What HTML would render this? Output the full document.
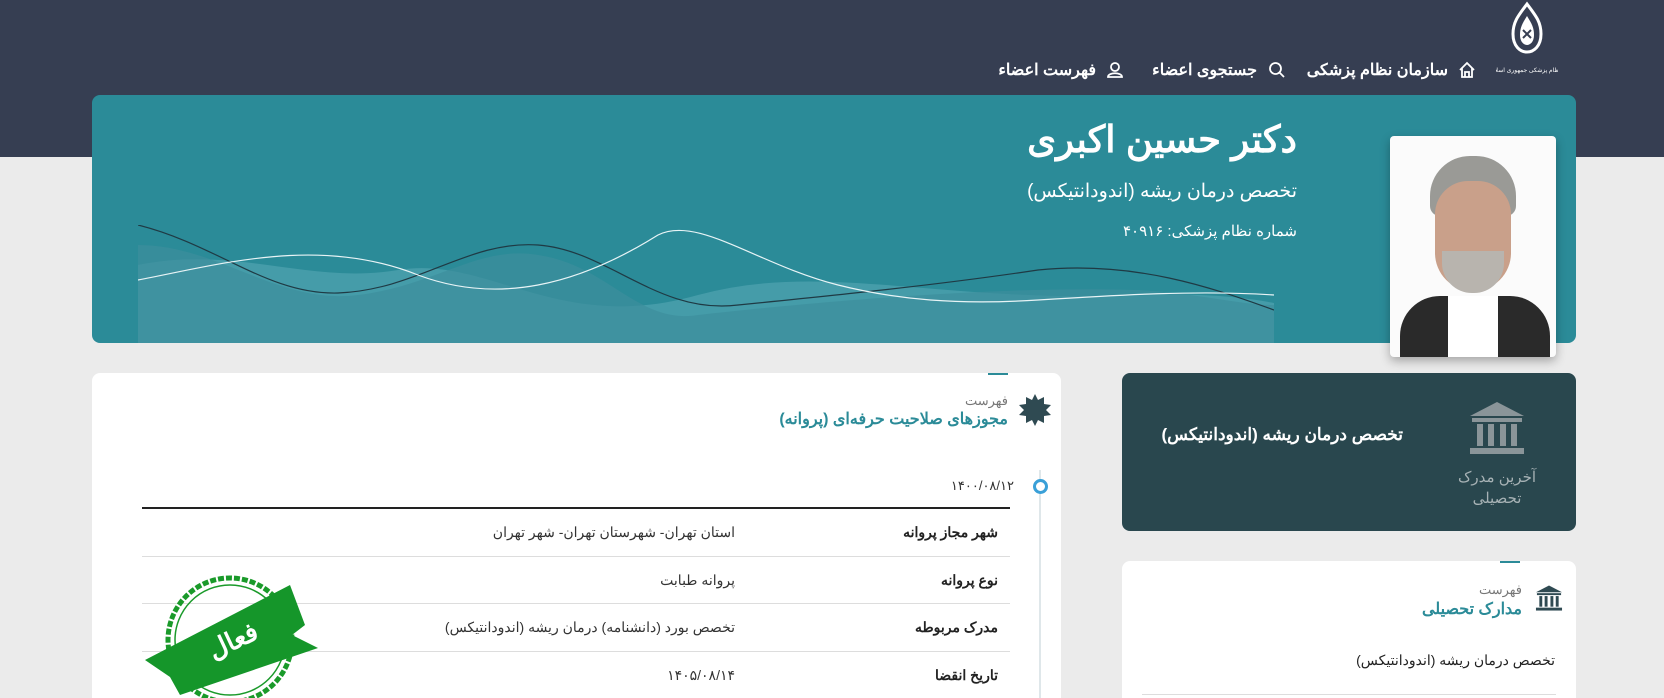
<!DOCTYPE html>
<html lang="fa" dir="rtl"><head><meta charset="utf-8">
<style>
*{margin:0;padding:0;box-sizing:border-box}
html,body{width:1664px;height:698px;overflow:hidden}
body{background:#ebebeb;font-family:"Liberation Sans","Noto Sans CJK SC",sans-serif;position:relative}
.abs{position:absolute}
.hdr{left:0;top:0;width:1664px;height:157px;background:#363e52}
.nav{color:#fff;font-size:16px;font-weight:bold;top:60px;white-space:nowrap}
.banner{left:92px;top:95px;width:1484px;height:248px;background:#2b8b98;border-radius:8px;overflow:hidden}
.card{background:#fff;border-radius:8px 8px 0 0}
.t{white-space:nowrap}
</style></head><body>
<div class="abs hdr"></div>
<svg class="abs" style="left:1496px;top:0" width="62" height="82" viewBox="0 0 62 82">
<path d="M31 4 C22 16 17 22 17 34 C17 46 24 52 31 52 C38 52 45 46 45 34 C45 22 40 16 31 4Z" fill="none" stroke="#fff" stroke-width="3"/>
<path d="M31 16 C26 24 24 28 24 35 C24 42 28 45 31 45 C34 45 38 42 38 35 C38 28 36 24 31 16Z" fill="#fff"/>
<path d="M27 30 L35 38 M35 30 L27 38" stroke="#363e52" stroke-width="2"/>
<text x="31" y="72" fill="#fff" font-size="6" text-anchor="middle">سازمان نظام پزشکی جمهوری اسلامی ایران</text>
</svg>
<svg class="abs" style="left:1458px;top:61px" width="18" height="18" viewBox="0 0 18 18"><path d="M2 9 L9 2 L16 9 M4 7 V16 H14 V7 M7 16 V11 H11 V16" fill="none" stroke="#fff" stroke-width="1.8"/></svg>
<div class="abs nav" style="right:216px">سازمان نظام پزشکی</div>
<svg class="abs" style="left:1268px;top:61px" width="18" height="18" viewBox="0 0 18 18"><circle cx="7.5" cy="7.5" r="5.5" fill="none" stroke="#fff" stroke-width="1.8"/><path d="M11.5 11.5 L16 16" stroke="#fff" stroke-width="1.8"/></svg>
<div class="abs nav" style="right:407px">جستجوی اعضاء</div>
<svg class="abs" style="left:1106px;top:61px" width="18" height="18" viewBox="0 0 18 18"><circle cx="9" cy="6" r="4" fill="none" stroke="#fff" stroke-width="1.8"/><path d="M2 16 C2 11 16 11 16 16 Z" fill="none" stroke="#fff" stroke-width="1.8"/></svg>
<div class="abs nav" style="right:568px">فهرست اعضاء</div>

<div class="abs banner">
<svg class="abs" style="left:46px;top:130px" width="1136" height="118" viewBox="0 0 1136 118">
<path d="M0 40 C100 20 170 60 260 45 C350 30 420 110 560 70 C690 35 800 80 1020 70 C1080 68 1120 75 1136 78 V118 H0Z" fill="#4a9fac" opacity=".85"/>
<path d="M0 20 C80 20 140 80 220 70 C300 60 340 20 400 30 C470 40 500 100 560 90 C650 80 850 60 1000 65 C1060 68 1100 80 1136 80 V118 H0Z" fill="#3d8f9c" opacity=".7"/>
<path d="M0 0 C80 20 130 70 200 68 C280 65 330 15 400 20 C470 25 520 90 600 80 C700 70 800 60 900 45 C1000 35 1080 65 1136 85" fill="none" stroke="#1f3a44" stroke-width="1.2"/>
<path d="M0 55 C80 40 180 10 280 50 C360 80 440 60 520 10 C560 -10 620 40 700 60 C760 75 820 80 900 75 C980 70 1060 65 1136 70" fill="none" stroke="#e8f4f6" stroke-width="1.2"/>
</svg>
</div>
<div class="abs t" style="right:367px;top:118px;color:#fff;font-size:37px;font-weight:bold">دکتر حسین اکبری</div>
<div class="abs t" style="right:367px;top:180px;color:#fff;font-size:19px">تخصص درمان ریشه (اندودانتیکس)</div>
<div class="abs t" style="right:367px;top:222px;color:#fff;font-size:15px">شماره نظام پزشکی: ۴۰۹۱۶</div>
<div class="abs" style="left:1390px;top:136px;width:166px;height:221px;background:#fbfbfb;border-radius:4px;overflow:hidden;box-shadow:0 4px 10px rgba(0,0,0,.3)">
<div class="abs" style="left:10px;top:160px;width:150px;height:80px;background:#2a2a2a;border-radius:40px 40px 0 0"></div>
<div class="abs" style="left:58px;top:160px;width:50px;height:70px;background:#fff"></div>
<div class="abs" style="left:40px;top:20px;width:86px;height:60px;background:#9a9a96;border-radius:40px 40px 10px 10px"></div>
<div class="abs" style="left:45px;top:45px;width:76px;height:110px;background:#c9a08a;border-radius:35px 35px 40px 40px"></div>
<div class="abs" style="left:52px;top:115px;width:62px;height:42px;background:#b8b4ae;border-radius:0 0 30px 30px"></div>
</div>

<div class="abs card" style="left:92px;top:373px;width:969px;height:325px"></div>
<div class="abs" style="left:988px;top:373px;width:20px;height:2px;background:#2b8b98"></div>
<svg class="abs" style="left:1018px;top:393px" width="34" height="34" viewBox="0 0 34 34"><polygon points="17,1 20,7 26,4 26,11 33,12 28,17 33,22 26,23 26,30 20,27 17,33 14,27 8,30 8,23 1,22 6,17 1,12 8,11 8,4 14,7" fill="#2f4a52"/></svg>
<div class="abs t" style="right:656px;top:393px;color:#777;font-size:13px">فهرست</div>
<div class="abs t" style="right:656px;top:409px;color:#2b8b98;font-size:16px;font-weight:bold">مجوزهای صلاحیت حرفه‌ای (پروانه)</div>
<div class="abs" style="left:1039px;top:470px;width:2px;height:228px;background:#dfe7ea"></div>
<div class="abs" style="left:1033px;top:479px;width:15px;height:15px;border:3px solid #3aa0d8;border-radius:50%;background:#fff"></div>
<div class="abs t" style="right:650px;top:478px;color:#333;font-size:13px">۱۴۰۰/۰۸/۱۲</div>
<div class="abs" style="left:142px;top:507px;width:868px;height:2px;background:#222"></div>
<div class="abs" style="left:142px;top:556px;width:868px;height:1px;background:#ddd"></div>
<div class="abs" style="left:142px;top:603px;width:868px;height:1px;background:#ddd"></div>
<div class="abs" style="left:142px;top:651px;width:868px;height:1px;background:#ddd"></div>
<div class="abs t" style="right:666px;top:524px;font-size:14px;font-weight:bold;color:#222">شهر مجاز پروانه</div>
<div class="abs t" style="right:929px;top:524px;font-size:14px;color:#333">استان تهران- شهرستان تهران- شهر تهران</div>
<div class="abs t" style="right:666px;top:572px;font-size:14px;font-weight:bold;color:#222">نوع پروانه</div>
<div class="abs t" style="right:929px;top:572px;font-size:14px;color:#333">پروانه طبابت</div>
<div class="abs t" style="right:666px;top:619px;font-size:14px;font-weight:bold;color:#222">مدرک مربوطه</div>
<div class="abs t" style="right:929px;top:619px;font-size:14px;color:#333">تخصص بورد (دانشنامه) درمان ریشه (اندودانتیکس)</div>
<div class="abs t" style="right:666px;top:667px;font-size:14px;font-weight:bold;color:#222">تاریخ انقضا</div>
<div class="abs t" style="right:929px;top:667px;font-size:14px;color:#333">۱۴۰۵/۰۸/۱۴</div>
<svg class="abs" style="left:140px;top:565px" width="180" height="133" viewBox="0 0 180 133">
<circle cx="90" cy="75" r="62" fill="none" stroke="#1a9a2a" stroke-width="5" stroke-dasharray="6 2"/>
<circle cx="90" cy="75" r="55" fill="none" stroke="#1a9a2a" stroke-width="1.5"/>
<polygon points="5,95 150,20 165,60 152,70 178,83 40,130 30,112" fill="#15962a"/>
<text x="95" y="84" fill="#fff" font-size="26" font-weight="bold" text-anchor="middle" transform="rotate(-25 95 80)">فعال</text>
</svg>

<div class="abs" style="left:1122px;top:373px;width:454px;height:158px;background:#29474e;border-radius:8px"></div>
<svg class="abs" style="left:1468px;top:400px" width="58" height="56" viewBox="0 0 58 56"><polygon points="29,2 56,16 2,16" fill="#8a9599"/><rect x="4" y="18" width="50" height="4" fill="#8a9599"/><rect x="9" y="24" width="6" height="22" fill="#8a9599"/><rect x="20" y="24" width="6" height="22" fill="#8a9599"/><rect x="32" y="24" width="6" height="22" fill="#8a9599"/><rect x="43" y="24" width="6" height="22" fill="#8a9599"/><rect x="2" y="48" width="54" height="6" fill="#8a9599"/></svg>
<div class="abs" style="left:1440px;top:467px;width:114px;text-align:center;color:#a7b2b5;font-size:15px;line-height:21px">آخرین مدرک تحصیلی</div>
<div class="abs t" style="right:261px;top:425px;color:#fff;font-size:17px;font-weight:bold">تخصص درمان ریشه (اندودانتیکس)</div>

<div class="abs card" style="left:1122px;top:561px;width:454px;height:137px"></div>
<div class="abs" style="left:1500px;top:561px;width:20px;height:2px;background:#2b8b98"></div>
<svg class="abs" style="left:1535px;top:584px" width="28" height="28" viewBox="0 0 58 56"><polygon points="29,2 56,16 2,16" fill="#2f4a52"/><rect x="4" y="18" width="50" height="4" fill="#2f4a52"/><rect x="9" y="24" width="6" height="22" fill="#2f4a52"/><rect x="20" y="24" width="6" height="22" fill="#2f4a52"/><rect x="32" y="24" width="6" height="22" fill="#2f4a52"/><rect x="43" y="24" width="6" height="22" fill="#2f4a52"/><rect x="2" y="48" width="54" height="6" fill="#2f4a52"/></svg>
<div class="abs t" style="right:142px;top:582px;color:#777;font-size:13px">فهرست</div>
<div class="abs t" style="right:142px;top:599px;color:#2b8b98;font-size:16px;font-weight:bold">مدارک تحصیلی</div>
<div class="abs t" style="right:109px;top:652px;color:#222;font-size:14px">تخصص درمان ریشه (اندودانتیکس)</div>
<div class="abs" style="left:1142px;top:694px;width:414px;height:1px;background:#ddd"></div>
</body></html>
